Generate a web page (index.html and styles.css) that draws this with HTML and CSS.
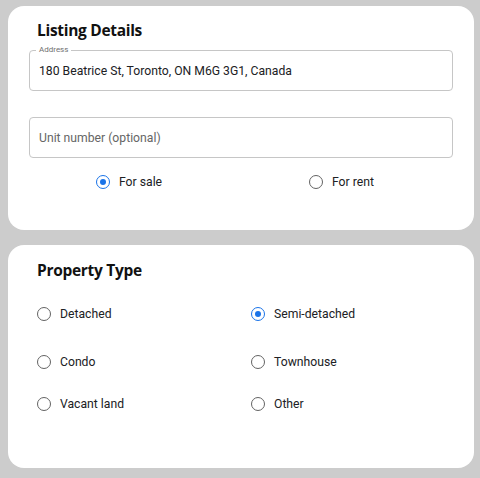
FILE: index.html
```html
<!DOCTYPE html>
<html>
<head>
<meta charset="utf-8">
<link rel="stylesheet" href="styles.css">
</head>
<body>
<section class="card card-listing">
  <h2 class="card-title">Listing Details</h2>
  <div class="field field-filled">
    <span class="field-label">Address</span>
    <span class="field-value">180 Beatrice St, Toronto, ON M6G 3G1, Canada</span>
  </div>
  <div class="field field-empty">
    <span class="field-placeholder">Unit number (optional)</span>
  </div>
  <div class="sale-row">
    <label class="radio-item"><span class="radio checked"></span><span class="radio-text">For sale</span></label>
    <label class="radio-item"><span class="radio"></span><span class="radio-text">For rent</span></label>
  </div>
</section>
<section class="card card-type">
  <h2 class="card-title">Property Type</h2>
  <div class="type-grid">
    <label class="radio-item"><span class="radio"></span><span class="radio-text">Detached</span></label>
    <label class="radio-item"><span class="radio checked"></span><span class="radio-text">Semi-detached</span></label>
    <label class="radio-item"><span class="radio"></span><span class="radio-text">Condo</span></label>
    <label class="radio-item"><span class="radio"></span><span class="radio-text">Townhouse</span></label>
    <label class="radio-item"><span class="radio"></span><span class="radio-text">Vacant land</span></label>
    <label class="radio-item"><span class="radio"></span><span class="radio-text">Other</span></label>
  </div>
</section>
</body>
</html>
```

FILE: styles.css
```css
html, body {
  margin: 0;
  padding: 0;
}
body {
  background: #cccccc;
  padding: 6px 6px 0 8px;
  font-family: Roboto, "Liberation Sans", sans-serif;
  color: #202124;
  width: 466px;
}
.card {
  background: #ffffff;
  border-radius: 16px;
  padding: 0 21px;
  box-sizing: border-box;
}
.card-listing {
  height: 224px;
  padding-top: 14px;
}
.card-type {
  margin-top: 15px;
  height: 223px;
  padding-top: 15px;
}
.card-title {
  margin: 0 0 0 8px;
  font-family: "Open Sans", Inter, sans-serif;
  font-weight: 700;
  font-size: 15.5px;
  line-height: 20px;
  letter-spacing: -0.3px;
  color: #111111;
}
.field {
  position: relative;
  height: 41px;
  border: 1px solid #c6c6c6;
  border-radius: 4px;
  box-sizing: border-box;
  display: flex;
  align-items: center;
  padding: 0 9px;
}
.field-filled {
  margin-top: 10px;
}
.field-empty {
  margin-top: 26px;
}
.field-label {
  position: absolute;
  top: -6px;
  left: 6px;
  padding: 0 3px;
  background: #ffffff;
  font-size: 8px;
  line-height: 10px;
  color: #6f6f6f;
}
.field-value {
  font-size: 12.2px;
  color: #202124;
  padding-top: 1px;
}
.field-placeholder {
  font-size: 12.2px;
  color: #666666;
  padding-top: 1px;
}
.sale-row {
  display: grid;
  grid-template-columns: 213px 211px;
  margin-top: 17px;
}
.sale-row .radio-item {
  padding-left: 67px;
}
.radio-item {
  display: flex;
  align-items: center;
  gap: 9px;
  height: 14px;
  font-size: 12.2px;
  color: #202124;
}
.radio {
  width: 14px;
  height: 14px;
  border: 1.5px solid #636363;
  border-radius: 50%;
  box-sizing: border-box;
  flex: none;
  position: relative;
}
.radio.checked {
  border-color: #1a73e8;
}
.radio.checked::after {
  content: "";
  position: absolute;
  left: 2.5px;
  top: 2.5px;
  width: 6px;
  height: 6px;
  border-radius: 50%;
  background: #1a73e8;
}
.type-grid {
  display: grid;
  grid-template-columns: 214px 1fr;
  grid-template-rows: 14px 14px 14px;
  row-gap: 34px;
  margin-top: 27px;
  padding-left: 8px;
}
.type-grid .radio-item:nth-child(n+5) {
  margin-top: -6px;
}
```
